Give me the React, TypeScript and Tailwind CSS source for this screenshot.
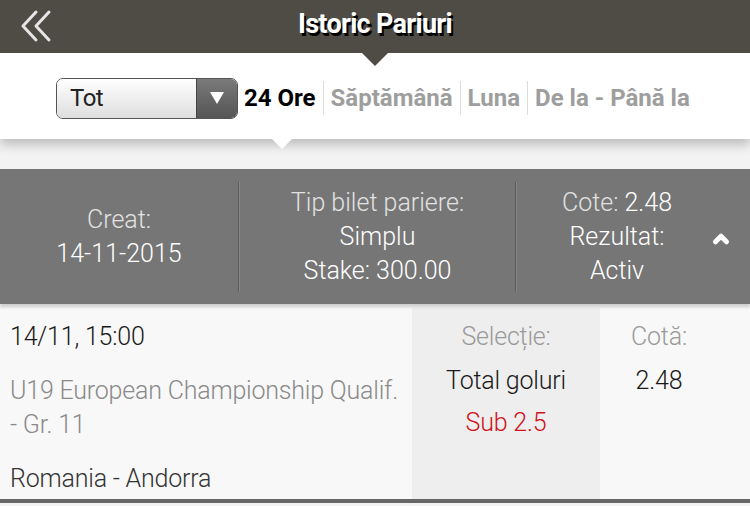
import { ChevronUp } from 'lucide-react'

const tabs = [
  { label: '24 Ore', active: true },
  { label: 'Săptămână', active: false },
  { label: 'Luna', active: false },
  { label: 'De la - Până la', active: false },
]

function BackIcon() {
  return (
    <svg width="34" height="34" viewBox="0 0 34 34" fill="none">
      <polyline points="17,3 4,17 17,31" stroke="#e6e6e6" strokeWidth="3" strokeLinecap="round" strokeLinejoin="round" />
      <polyline points="30,3 17,17 30,31" stroke="#e6e6e6" strokeWidth="3" strokeLinecap="round" strokeLinejoin="round" />
    </svg>
  )
}

export default function App() {
  return (
    <div className="w-[750px] h-[506px] overflow-hidden bg-[#f3f3f3] font-['Roboto',sans-serif]">
      {/* Header */}
      <div className="relative h-[53px] bg-[#4f4c46] flex items-center justify-center z-20">
        <div className="absolute left-[19px] top-[9px]">
          <BackIcon />
        </div>
        <h1 className="text-white font-bold text-[27px] tracking-[-0.7px] [text-shadow:2px_3px_0_#000] mb-[4px]">
          Istoric Pariuri
        </h1>
        <div className="absolute left-[362px] top-[53px] w-0 h-0 border-l-[13px] border-r-[13px] border-t-[13px] border-l-transparent border-r-transparent border-t-[#4f4c46]" />
      </div>

      {/* Filter bar */}
      <div className="relative h-[86px] bg-white flex items-center pl-[56px] gap-[6px] shadow-[0_6px_10px_rgba(0,0,0,0.22)] z-10">
        <div className="flex h-[41px] w-[182px] rounded-[7px] border border-[#555] overflow-hidden mt-[4px]">
          <div className="flex-1 flex items-center pl-[13px] text-[24px] text-[#222] tracking-[-0.5px] bg-gradient-to-b from-white to-[#dedede]">
            Tot
          </div>
          <div className="w-[41px] flex items-center justify-center bg-gradient-to-b from-[#7a7a7a] to-[#555] border-l border-[#444]">
            <div className="w-0 h-0 border-l-[7px] border-r-[7px] border-t-[12px] border-l-transparent border-r-transparent border-t-white" />
          </div>
        </div>
        <div className="flex items-center mt-[4px]">
          {tabs.map((t, i) => (
            <div key={t.label} className="flex items-center">
              {i > 0 && <div className="w-px h-[34px] bg-[#dcdcdc] mx-[7px]" />}
              <span
                className={`text-[24px] font-bold tracking-[0px] ${t.active ? 'text-black' : 'text-[#9e9e9e]'}`}
              >
                {t.label}
              </span>
            </div>
          ))}
        </div>
        <div className="absolute left-[272px] top-[86px] w-0 h-0 border-l-[10px] border-r-[10px] border-t-[10px] border-l-transparent border-r-transparent border-t-white" />
      </div>

      <div className="h-[30px]" />

      {/* Summary */}
      <div className="relative h-[135px] bg-[#767676] flex items-center shadow-[0_3px_3px_rgba(0,0,0,0.15)] font-light text-[25px] leading-[34px]">
        <div className="w-[238px] flex flex-col items-center text-white">
          <span className="text-[#e2e2e2]">Creat:</span>
          <span>14-11-2015</span>
        </div>
        <div className="w-[2px] h-[110px] bg-[#5c5c5c] border-r border-[#888]" />
        <div className="w-[275px] flex flex-col items-center text-white">
          <span className="text-[#e2e2e2]">Tip bilet pariere:</span>
          <span>Simplu</span>
          <span>Stake: 300.00</span>
        </div>
        <div className="w-[2px] h-[110px] bg-[#5c5c5c] border-r border-[#888]" />
        <div className="w-[200px] flex flex-col items-center text-white">
          <span>
            <span className="text-[#e2e2e2]">Cote: </span>2.48
          </span>
          <span>Rezultat:</span>
          <span>Activ</span>
        </div>
        <div className="flex-1 flex ml-[-7px] mt-[4px]">
          <ChevronUp className="w-[22px] h-[22px] text-white" strokeWidth={5.5} />
        </div>
      </div>

      {/* Event row */}
      <div className="mt-[4px] h-[195px] bg-[#f8f8f8] flex border-b-[4px] border-[#676767] text-[25px] tracking-[-0.2px] font-light">
        <div className="w-[412px] pl-[10px] pt-[13px] flex flex-col">
          <span className="text-[#1a1a1a] leading-[32px]">14/11, 15:00</span>
          <span className="text-[#8a8a8a] leading-[34px] mt-[21px]">U19 European Championship Qualif.<br />- Gr. 11</span>
          <span className="text-[#333] leading-[32px] mt-[21px]">Romania - Andorra</span>
        </div>
        <div className="w-[188px] bg-[#eeeeee] pt-[13px] flex flex-col items-center">
          <span className="text-[#9a9a9a] leading-[32px]">Selecție:</span>
          <span className="text-[#1a1a1a] leading-[32px] mt-[12px]">Total goluri</span>
          <span className="text-[#d0131b] leading-[32px] mt-[10px]">Sub 2.5</span>
        </div>
        <div className="w-[118px] pt-[13px] flex flex-col items-center">
          <span className="text-[#9a9a9a] leading-[32px]">Cotă:</span>
          <span className="text-[#1a1a1a] leading-[32px] mt-[12px]">2.48</span>
        </div>
      </div>
    </div>
  )
}
